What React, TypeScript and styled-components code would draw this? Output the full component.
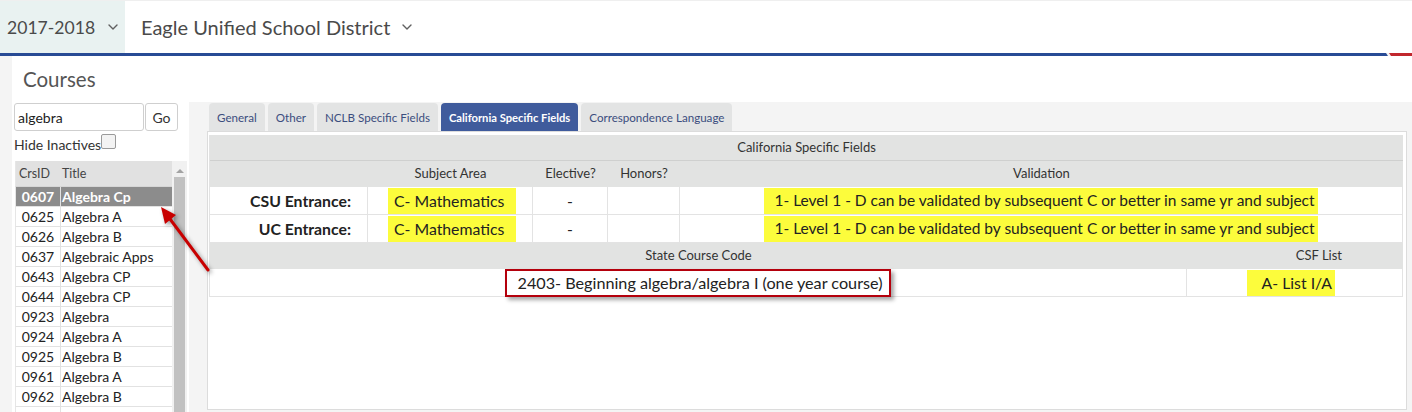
import React from "react";
import styled, { createGlobalStyle } from "styled-components";

const GlobalStyle = createGlobalStyle`
  html, body {
    margin: 0;
    padding: 0;
    overflow: hidden;
    background: #f4f4f4;
  }
  body {
    font-family: Lato, "Open Sans", Arial, sans-serif;
    color: #333;
  }
  * { box-sizing: border-box; }
`;

const Shell = styled.div`
  position: relative;
  width: 1412px;
`;

/* ---------- top header ---------- */
const Header = styled.header`
  display: flex;
  align-items: stretch;
  height: 53px;
  background: #fff;
  border-top: 1px solid #efefef;
`;

const Picker = styled.div<{ $tinted?: boolean }>`
  display: flex;
  align-items: center;
  gap: ${(p) => (p.$tinted ? "13px" : "12px")};
  width: ${(p) => (p.$tinted ? "125px" : "auto")};
  padding-left: ${(p) => (p.$tinted ? "7px" : "16px")};
  background: ${(p) => (p.$tinted ? "#e9f2f1" : "transparent")};
  font-size: ${(p) => (p.$tinted ? "17.6px" : "20px")};
  color: #4a4a4a;
  white-space: nowrap;
`;

const AccentBar = styled.div`
  display: flex;
  gap: 1px;
  height: 3px;
`;

const BlueStripe = styled.div`
  flex: 1;
  background: #284b95;
  clip-path: polygon(0 0, calc(100% - 2px) 0, 100% 100%, 0 100%);
`;

const RedStripe = styled.div`
  width: 23px;
  background: #c1272d;
  clip-path: polygon(0 0, 100% 0, 100% 100%, 2px 100%);
`;

const Chevron = () => (
  <svg width="10" height="6" viewBox="0 0 10 6" fill="none">
    <polyline points="1,1 5,5 9,1" stroke="#606060" strokeWidth="1.4" strokeLinecap="round" strokeLinejoin="round" />
  </svg>
);

/* ---------- workspace ---------- */
const Workspace = styled.div`
  padding-left: 12px;
`;

const TitleBar = styled.div`
  display: flex;
  align-items: center;
  height: 46px;
  padding-left: 11px;
  background: #fff;
  font-size: 20.5px;
  color: #555;
`;

const Columns = styled.div`
  display: flex;
  align-items: flex-start;
  gap: 18px;
`;

/* ---------- course search sidebar ---------- */
const Sidebar = styled.aside`
  width: 177px;
  background: #fff;
  padding: 1px 0 0 2px;
`;

const SearchRow = styled.div`
  display: flex;
  gap: 1px;
`;

const SearchInput = styled.input`
  width: 130px;
  height: 28px;
  border: 1px solid #cfcfcf;
  border-radius: 3px;
  padding: 0 3px;
  font: 14px Lato, Arial, sans-serif;
  color: #222;
  outline: none;
`;

const GoButton = styled.button`
  width: 33px;
  height: 28px;
  border: 1px solid #cfcfcf;
  border-radius: 3px;
  background: #fff;
  font: 14px Lato, Arial, sans-serif;
  color: #333;
  padding: 0;
`;

const HideRow = styled.label`
  display: flex;
  align-items: flex-start;
  height: 30px;
  padding-top: 4px;
  font-size: 14px;
  line-height: 20px;
  color: #333;
`;

const Checkbox = styled.span`
  width: 15px;
  height: 15px;
  margin-top: -1px;
  border: 1px solid #9a9a9a;
  border-radius: 2px;
  background: #f3f3f3;
`;

const ListFrame = styled.div`
  display: flex;
  width: 172px;
  height: 262px;
  margin-left: 1px;
  overflow: hidden;
`;

const CourseList = styled.div`
  width: 157px;
`;

const ListRow = styled.div<{ $head?: boolean; $selected?: boolean }>`
  display: grid;
  grid-template-columns: 45px 1fr;
  height: ${(p) => (p.$head ? "26px" : "20px")};
  background: ${(p) => (p.$head ? "#e1e1e1" : p.$selected ? "#8c8c8c" : "#fff")};
  border-bottom: 1px solid ${(p) => (p.$head ? "#d6d6d6" : "#e2e2e2")};
  border-left: 1px solid #e6e6e6;
  font-size: ${(p) => (p.$head ? "12.5px" : "14px")};
  font-weight: ${(p) => (p.$selected ? 700 : 400)};
  color: ${(p) => (p.$head ? "#444" : p.$selected ? "#fff" : "#222")};
  line-height: ${(p) => (p.$head ? "25px" : "19px")};
  white-space: nowrap;
`;

const IdCell = styled.span<{ $head?: boolean }>`
  text-align: ${(p) => (p.$head ? "left" : "center")};
  padding-left: ${(p) => (p.$head ? "3px" : "0")};
  border-right: 1px solid #e2e2e2;
`;

const TitleCell = styled.span`
  padding-left: 1px;
  overflow: hidden;
`;

const ScrollTrack = styled.div`
  display: flex;
  flex-direction: column;
  align-items: center;
  width: 15px;
  background: #f1f1f1;
`;

const ScrollArrow = styled.span`
  margin-top: 8px;
  width: 0;
  height: 0;
  border-left: 4px solid transparent;
  border-right: 4px solid transparent;
  border-bottom: 4px solid #a3a3a3;
`;

const ScrollThumb = styled.span`
  margin-top: 4px;
  width: 11px;
  flex: 1;
  background: #c1c1c1;
`;

/* ---------- tabbed detail panel ---------- */
const MainPanel = styled.section`
  flex: 1;
  margin-right: 5px;
`;

const TabStrip = styled.nav`
  display: flex;
  gap: 3px;
  padding: 1px 0 0 2px;
`;

const Tab = styled.div<{ $active?: boolean }>`
  height: 28px;
  padding: 0 8px;
  border-radius: 4px 4px 0 0;
  background: ${(p) => (p.$active ? "#3f5b9c" : "#e3e4e4")};
  color: ${(p) => (p.$active ? "#fff" : "#3b4d7e")};
  font-size: ${(p) => (p.$active ? "11.2px" : "11.6px")};
  font-weight: ${(p) => (p.$active ? 700 : 400)};
  line-height: 30px;
  white-space: nowrap;
`;

const TabBody = styled.div`
  height: 279px;
  padding: 3px 3px 0 1px;
  background: #fff;
  border: 1px solid #dcdcdc;
`;

const FieldGrid = styled.div<{ $cols: string }>`
  display: grid;
  grid-template-columns: ${(p) => p.$cols};
  border-left: 1px solid #e3e3e3;
`;

const HeadCell = styled.div<{ $align?: string; $pad?: string; $full?: boolean; $rule?: boolean }>`
  grid-column: ${(p) => (p.$full ? "1 / -1" : "auto")};
  height: 26px;
  padding: ${(p) => p.$pad ?? "0"};
  background: #e2e3e2;
  border-bottom: 1px solid ${(p) => (p.$rule ? "#cfd0cf" : "#e2e3e2")};
  font-size: 13px;
  line-height: 25px;
  color: #333;
  text-align: ${(p) => p.$align ?? "center"};
  white-space: nowrap;
`;

const Cell = styled.div<{ $align?: string; $pad?: string; $label?: boolean }>`
  height: 28px;
  padding: ${(p) => p.$pad ?? "0"};
  border-right: 1px solid #e3e3e3;
  border-bottom: 1px solid #e3e3e3;
  font-size: 15.8px;
  font-weight: ${(p) => (p.$label ? 700 : 400)};
  line-height: 27px;
  color: #222;
  text-align: ${(p) => p.$align ?? "center"};
  white-space: nowrap;
`;

const Marked = styled.span<{ $pad?: string; $size?: string }>`
  display: inline-block;
  height: 26px;
  margin-top: 1px;
  padding: ${(p) => p.$pad ?? "0 6px"};
  background: #fcfc3c;
  font-size: ${(p) => p.$size ?? "inherit"};
  line-height: 25px;
  vertical-align: top;
`;

const Boxed = styled.span`
  position: relative;
  display: inline-block;
  height: 28px;
  padding: 0 7px 0 11px;
  border: 2px solid #b4000c;
  background: #fff;
  box-shadow: 3px 3px 4px rgba(0, 0, 0, 0.35);
  font-size: 16.2px;
  line-height: 24px;
  vertical-align: top;
`;

const Pointer = styled.svg`
  position: absolute;
  left: 150px;
  top: 195px;
  overflow: visible;
  filter: drop-shadow(2px 2px 2px rgba(0, 0, 0, 0.4));
  pointer-events: none;
`;

const courses: [string, string][] = [
  ["0607", "Algebra Cp"],
  ["0625", "Algebra A"],
  ["0626", "Algebra B"],
  ["0637", "Algebraic Apps"],
  ["0643", "Algebra CP"],
  ["0644", "Algebra CP"],
  ["0923", "Algebra"],
  ["0924", "Algebra A"],
  ["0925", "Algebra B"],
  ["0961", "Algebra A"],
  ["0962", "Algebra B"],
  ["", ""],
];

const tabs = ["General", "Other", "NCLB Specific Fields", "California Specific Fields", "Correspondence Language"];

const validation = "1- Level 1 - D can be validated by subsequent C or better in same yr and subject";

export default function App() {
  return (
    <Shell>
      <GlobalStyle />
      <Header>
        <Picker $tinted>
          2017-2018 <Chevron />
        </Picker>
        <Picker>
          Eagle Unified School District <Chevron />
        </Picker>
      </Header>
      <AccentBar>
        <BlueStripe />
        <RedStripe />
      </AccentBar>

      <Workspace>
        <TitleBar>Courses</TitleBar>
        <Columns>
          <Sidebar>
            <SearchRow>
              <SearchInput defaultValue="algebra" />
              <GoButton>Go</GoButton>
            </SearchRow>
            <HideRow>
              Hide Inactives
              <Checkbox />
            </HideRow>
            <ListFrame>
              <CourseList>
                <ListRow $head>
                  <IdCell $head>CrsID</IdCell>
                  <TitleCell>Title</TitleCell>
                </ListRow>
                {courses.map(([id, title], i) => (
                  <ListRow key={i} $selected={i === 0}>
                    <IdCell>{id}</IdCell>
                    <TitleCell>{title}</TitleCell>
                  </ListRow>
                ))}
              </CourseList>
              <ScrollTrack>
                <ScrollArrow />
                <ScrollThumb />
              </ScrollTrack>
            </ListFrame>
          </Sidebar>

          <MainPanel>
            <TabStrip>
              {tabs.map((t) => (
                <Tab key={t} $active={t === "California Specific Fields"}>
                  {t}
                </Tab>
              ))}
            </TabStrip>
            <TabBody>
              <FieldGrid $cols="158px 165px 75px 72px 1fr">
                <HeadCell $full $rule>California Specific Fields</HeadCell>
                <HeadCell />
                <HeadCell>Subject Area</HeadCell>
                <HeadCell>Elective?</HeadCell>
                <HeadCell>Honors?</HeadCell>
                <HeadCell>Validation</HeadCell>

                {["CSU Entrance:", "UC Entrance:"].map((label) => (
                  <React.Fragment key={label}>
                    <Cell $label $align="right" $pad="0 16px 0 0">
                      {label}
                    </Cell>
                    <Cell $align="left" $pad="0 0 0 20px">
                      <Marked $pad="0 12px 0 6px">C- Mathematics</Marked>
                    </Cell>
                    <Cell>-</Cell>
                    <Cell />
                    <Cell>
                      <Marked $pad="0 3px 0 10px" $size="15.5px">
                        {validation}
                      </Marked>
                    </Cell>
                  </React.Fragment>
                ))}
              </FieldGrid>

              <FieldGrid $cols="977px 1fr">
                <HeadCell>State Course Code</HeadCell>
                <HeadCell $align="right" $pad="0 61px 0 0">
                  CSF List
                </HeadCell>
                <Cell>
                  <Boxed>2403- Beginning algebra/algebra I (one year course)</Boxed>
                </Cell>
                <Cell $align="right" $pad="0 67px 0 0">
                  <Marked $pad="0 3px 0 15px">A- List I/A</Marked>
                </Cell>
              </FieldGrid>
            </TabBody>
          </MainPanel>
        </Columns>
      </Workspace>

      <Pointer width="70" height="90" viewBox="0 0 70 90">
        <line x1="58" y1="75" x2="20" y2="24" stroke="#c80000" strokeWidth="3" strokeLinecap="round" />
        <polygon points="11,12 26,20 15,29" fill="#c80000" />
      </Pointer>
    </Shell>
  );
}
